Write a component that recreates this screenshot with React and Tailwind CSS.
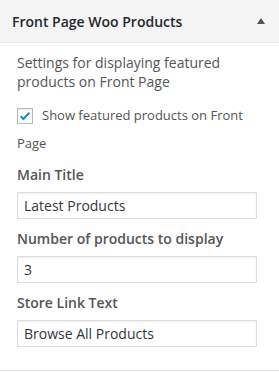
import React, { useState } from 'react';

const Field = ({ label, value, className = '' }) => (
  <div className={className}>
    <label className="block text-[14px] leading-[20px] font-semibold text-[#555]">{label}</label>
    <input
      type="text"
      defaultValue={value}
      className="mt-[7px] block w-[240px] h-[27px] border border-[#ddd] shadow-[inset_0_1px_2px_rgba(0,0,0,0.07)] px-[6px] text-[14px] text-[#32373c] outline-none"
    />
  </div>
);

const App = () => {
  const [checked, setChecked] = useState(true);

  return (
    <div className="w-[279px] h-[372px] bg-white font-['Open_Sans',sans-serif]">
      <div className="border-b border-[#e5e5e5]">
        {/* Widget header */}
        <div className="h-[43px] bg-[#f5f5f5] border-b border-[#e8e8e8] flex items-center justify-between pl-3 pr-[14px]">
          <h3 className="text-[14px] font-semibold text-[#23282d]">Front Page Woo Products</h3>
          <span className="w-0 h-0 border-l-[4px] border-r-[4px] border-b-[6px] border-l-transparent border-r-transparent border-b-[#555]" />
        </div>

        {/* Widget form */}
        <div className="px-[17px] pt-[10px] pb-[23px]">
          <p className="text-[14px] leading-[19px] text-[#555]">
            Settings for displaying featured products on Front Page
          </p>

          <p className="mt-[10px] text-[13px] leading-[28px] text-[#555]">
            <button
              type="button"
              onClick={() => setChecked(!checked)}
              className="inline-flex align-[-3px] items-center justify-center w-[16px] h-[16px] border border-[#b4b9be] bg-white shadow-[inset_0_1px_2px_rgba(0,0,0,0.1)] mr-[9px]"
            >
              {checked && (
                <svg viewBox="0 0 16 16" className="w-[14px] h-[14px]">
                  <path d="M3 8.2l3.2 3.2L13 4.3" fill="none" stroke="#1e8cbe" strokeWidth="2.4" />
                </svg>
              )}
            </button>
            Show featured products on Front Page
          </p>

          <Field label="Main Title" value="Latest Products" className="mt-[8px]" />
          <Field label="Number of products to display" value="3" className="mt-[10px]" />
          <Field label="Store Link Text" value="Browse All Products" className="mt-[10px]" />
        </div>
      </div>
    </div>
  );
};

export default App;
